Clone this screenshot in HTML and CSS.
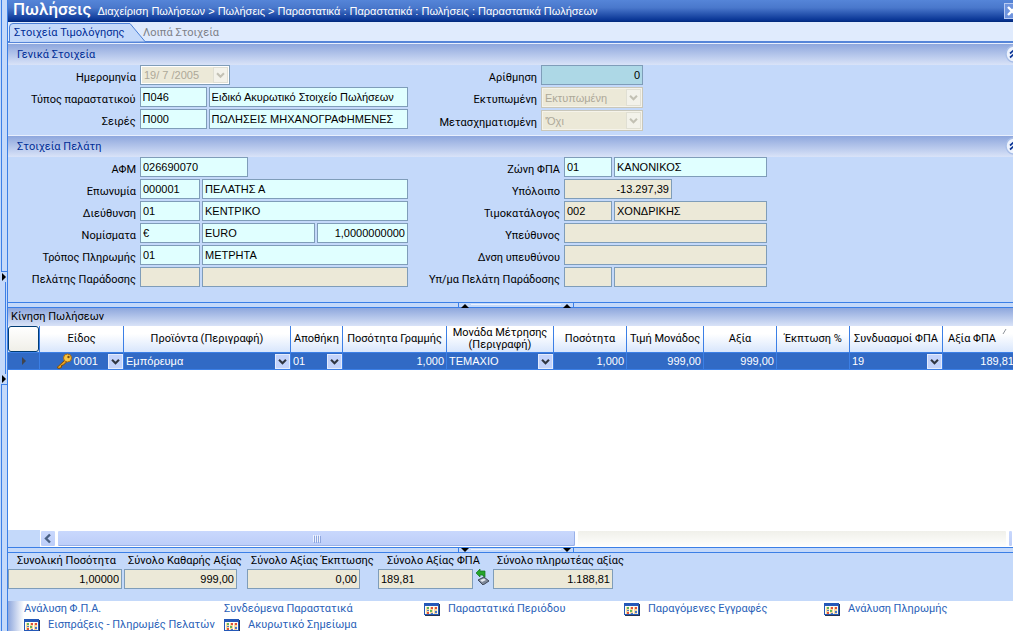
FILE: index.html
```html
<!DOCTYPE html>
<html lang="el">
<head>
<meta charset="utf-8">
<title>Πωλήσεις</title>
<link rel="stylesheet" href="styles.css">
</head>
<body>
<svg class="defs" aria-hidden="true">
  <symbol id="chev" viewBox="0 0 15 15"><path d="M3.5 5.5l4 4 4-4" fill="none" stroke="currentColor" stroke-width="2.4"/></symbol>
  <symbol id="report" viewBox="0 0 16 13">
    <path d="M2 1h14v12H1z" fill="#26344f"/>
    <rect x="0.5" y="0.5" width="14" height="11" fill="#fffdf0" stroke="#2458b8"/>
    <path d="M0 0h15v3H0z" fill="#2458b8"/>
    <path d="M2 4h3v7H2zM6 4h3v7H6zM10 4h3v7h-3z" fill="#f6d9a0"/>
    <path d="M3 4h2v2H3zM6 7h2v2H6z" fill="#5fb45a"/>
    <path d="M7 4h2v2H7zM11 4h2v2h-2zM3 9h2v2H3z" fill="#e0503a"/>
    <path d="M11 8h2v2h-2zM3 7h2v1H3zM7 10h2v1H7z" fill="#4a78c8"/>
  </symbol>
  <symbol id="collapse" viewBox="0 0 18 18">
    <circle cx="9" cy="9" r="8" fill="#eef3fd" stroke="#a9bfe8" stroke-width="1.5"/>
    <path d="M5 8.5l4-3.500 4 3.500M5 12.500l4-3.500 4 3.500" fill="none" stroke="#0b3596" stroke-width="1.7"/>
  </symbol>
</svg>
<div class="app">
  <aside class="rail">
    <button class="rail-grip" aria-label="Πλαϊνό πλαίσιο">
      <svg width="5" height="8"><path d="M1 0l4 4-4 4z"/></svg>
      <svg width="5" height="8"><path d="M1 0l4 4-4 4z"/></svg>
    </button>
  </aside>
  <main class="main">
    <header class="titlebar">
      <h1>Πωλήσεις</h1>
      <p>Διαχείριση Πωλήσεων &gt; Πωλήσεις &gt; Παραστατικά : Παραστατικά : Πωλήσεις : Παραστατικά Πωλήσεων</p>
      <button class="close" aria-label="Κλείσιμο"><svg width="16" height="14"><path d="M4 3l8 8M12 3l-8 8" stroke="#fff" stroke-width="2.4"/></svg></button>
    </header>
    <nav class="tabs">
      <svg class="tab-shape" width="132" height="19" aria-hidden="true"><path d="M0.500 19V4q0-3.500 3.500-3.500h117l15 18" fill="#c4d9fa" stroke="#4a80d8"/></svg>
      <button class="tab active">Στοιχεία Τιμολόγησης</button>
      <button class="tab">Λοιπά Στοιχεία</button>
    </nav>

    <section>
      <h2 class="section-head">Γενικά Στοιχεία<button class="collapse" aria-label="Σύμπτυξη"><svg width="18" height="18"><use href="#collapse"/></svg></button></h2>
      <div class="form general">
        <div class="pane left">
          <div class="row"><label for="date">Ημερομηνία</label><span class="drop date"><select id="date" disabled><option>19/ 7 /2005</option></select><svg><use href="#chev"/></svg></span></div>
          <div class="row"><label for="type">Τύπος παραστατικού</label><input id="type" class="w67" value="Π046"><input class="w200" aria-label="Περιγραφή τύπου" value="Ειδικό Ακυρωτικό Στοιχείο Πωλήσεων"></div>
          <div class="row"><label for="series">Σειρές</label><input id="series" class="w67" value="Π000"><input class="w200" aria-label="Περιγραφή σειράς" value="ΠΩΛΗΣΕΙΣ ΜΗΧΑΝΟΓΡΑΦΗΜΕΝΕΣ"></div>
        </div>
        <div class="pane right">
          <div class="row"><label for="num">Αρίθμηση</label><input id="num" class="w102 number teal" value="0"></div>
          <div class="row tall"><label for="printed">Εκτυπωμένη</label><span class="drop"><select id="printed" disabled><option>Εκτυπωμένη</option></select><svg><use href="#chev"/></svg></span></div>
          <div class="row tall"><label for="conv">Μετασχηματισμένη</label><span class="drop"><select id="conv" disabled><option>'Όχι</option></select><svg><use href="#chev"/></svg></span></div>
        </div>
      </div>
    </section>

    <section>
      <h2 class="section-head">Στοιχεία Πελάτη<button class="collapse" aria-label="Σύμπτυξη"><svg width="18" height="18"><use href="#collapse"/></svg></button></h2>
      <div class="form customer">
        <div class="pane left">
          <div class="row"><label for="afm">ΑΦΜ</label><input id="afm" class="w108" value="026690070"></div>
          <div class="row"><label for="name">Επωνυμία</label><input id="name" class="w60" value="000001"><input class="w206" aria-label="Όνομα πελάτη" value="ΠΕΛΑΤΗΣ Α"></div>
          <div class="row"><label for="addr">Διεύθυνση</label><input id="addr" class="w60" value="01"><input class="w206" aria-label="Περιγραφή διεύθυνσης" value="ΚΕΝΤΡΙΚΟ"></div>
          <div class="row"><label for="cur">Νομίσματα</label><input id="cur" class="w60" value="€"><input class="w113" aria-label="Όνομα νομίσματος" value="EURO"><input class="w91 number" aria-label="Ισοτιμία" value="1,0000000000"></div>
          <div class="row"><label for="pay">Τρόπος Πληρωμής</label><input id="pay" class="w60" value="01"><input class="w206" aria-label="Περιγραφή πληρωμής" value="ΜΕΤΡΗΤΑ"></div>
          <div class="row"><label for="deliv">Πελάτης Παράδοσης</label><input id="deliv" class="w60" readonly><input class="w206" aria-label="Όνομα παράδοσης" readonly></div>
        </div>
        <div class="pane right">
          <div class="row"><label for="zone">Ζώνη ΦΠΑ</label><input id="zone" class="w48" value="01"><input class="w153" aria-label="Περιγραφή ζώνης" value="ΚΑΝΟΝΙΚΟΣ"></div>
          <div class="row"><label for="bal">Υπόλοιπο</label><input id="bal" class="w108 number" readonly value="-13.297,39"></div>
          <div class="row"><label for="price">Τιμοκατάλογος</label><input id="price" class="w48" readonly value="002"><input class="w153" aria-label="Περιγραφή τιμοκαταλόγου" readonly value="ΧΟΝΔΡΙΚΗΣ"></div>
          <div class="row"><label for="resp">Υπεύθυνος</label><input id="resp" class="w203" readonly></div>
          <div class="row"><label for="respaddr">Δνση υπευθύνου</label><input id="respaddr" class="w203" readonly></div>
          <div class="row"><label for="branch">Υπ/μα Πελάτη Παράδοσης</label><input id="branch" class="w48" readonly><input class="w153" aria-label="Περιγραφή υποκαταστήματος" readonly></div>
        </div>
      </div>
    </section>

    <div class="splitter"><span class="grip"><svg width="8" height="5"><path d="M0 5l4-4 4 4z"/></svg><svg width="8" height="5"><path d="M0 5l4-4 4 4z"/></svg></span></div>

    <section class="lines">
      <h2 class="grid-title">Κίνηση Πωλήσεων</h2>
      <div class="grid-body">
        <table>
          <colgroup><col class="c32"><col class="c84"><col class="c167"><col class="c52"><col class="c104"><col class="c107"><col class="c73"><col class="c77"><col class="c73"><col class="c73"><col class="c93"><col class="c74"></colgroup>
          <thead>
            <tr><th class="corner"><button aria-label="Επιλογή όλων"></button></th><th>Είδος</th><th>Προϊόντα (Περιγραφή)</th><th>Αποθήκη</th><th>Ποσότητα Γραμμής</th><th>Μονάδα Μέτρησης (Περιγραφή)</th><th>Ποσότητα</th><th>Τιμή Μονάδος</th><th>Αξία</th><th>Έκπτωση %</th><th>Συνδυασμοί ΦΠΑ</th><th class="sorted">Αξία ΦΠΑ<svg width="7" height="7"><path d="M1 6l3-5" stroke="#8d9299"/></svg></th></tr>
          </thead>
          <tbody>
            <tr>
              <td class="marker"><svg width="6" height="8"><path d="M1 0l4 4-4 4z" fill="#41454f"/></svg></td>
              <td><span class="cell end"><svg class="key" width="17" height="16"><path d="M9 7L1 14.500l2 1 2.500-1v-2l2-.5 3-3" fill="#e8a020" stroke="#7b4c0c"/><circle cx="11.500" cy="5" r="4" fill="#f7c545" stroke="#a86a10"/><circle cx="12.500" cy="4" r="1.200" fill="#7b4c0c"/></svg>0001<button class="dd" aria-label="Άνοιγμα"><svg><use href="#chev"/></svg></button></span></td>
              <td><span class="cell">Εμπόρευμα<button class="dd" aria-label="Άνοιγμα"><svg><use href="#chev"/></svg></button></span></td>
              <td><span class="cell">01<button class="dd" aria-label="Άνοιγμα"><svg><use href="#chev"/></svg></button></span></td>
              <td class="num">1,000</td>
              <td><span class="cell">ΤΕΜΑΧΙΟ<button class="dd" aria-label="Άνοιγμα"><svg><use href="#chev"/></svg></button></span></td>
              <td class="num">1,000</td>
              <td class="num">999,00</td>
              <td class="num">999,00</td>
              <td></td>
              <td><span class="cell">19<button class="dd" aria-label="Άνοιγμα"><svg><use href="#chev"/></svg></button></span></td>
              <td class="num">189,81</td>
            </tr>
          </tbody>
        </table>
      </div>
      <div class="scrollbar">
        <button class="sb-left" aria-label="Κύλιση αριστερά"><svg width="15" height="15"><path d="M9 3.500l-4 4 4 4" fill="none" stroke="#4a6185" stroke-width="2.400"/></svg></button>
        <div class="thumb"><i></i><i></i><i></i><i></i></div>
        <div class="track"></div>
        <button class="sb-right" aria-label="Κύλιση δεξιά"></button>
      </div>
    </section>

    <div class="splitter"><span class="grip"><svg width="8" height="5"><path d="M0 0l4 4 4-4z"/></svg><svg width="8" height="5"><path d="M0 0l4 4 4-4z"/></svg></span></div>

    <section class="totals">
      <div class="total t1"><label for="s1">Συνολική Ποσότητα</label><input id="s1" class="number" readonly value="1,00000"></div>
      <div class="total t2"><label for="s2">Σύνολο Καθαρής Αξίας</label><input id="s2" class="number" readonly value="999,00"></div>
      <div class="total t3"><label for="s3">Σύνολο Αξίας Έκπτωσης</label><input id="s3" class="number" readonly value="0,00"></div>
      <div class="total t4"><label for="s4">Σύνολο Αξίας ΦΠΑ</label><input id="s4" readonly value="189,81"></div>
      <button class="calc" aria-label="Υπολογισμός"><svg width="14" height="16"><path d="M2 11l6-3 5 4-6 4z" fill="#7d8797" stroke="#414a5c"/><path d="M4 11l4-1.500 2 1.500-4 2z" fill="#e3e7ee"/><path d="M0 4l4-4v2h5v6l-2-1V6H4v2z" fill="#25a52b" stroke="#13711c" stroke-width=".7"/></svg></button>
      <div class="total t5"><label for="s5">Σύνολο πληρωτέας αξίας</label><input id="s5" class="number" readonly value="1.188,81"></div>
    </section>

    <nav class="links">
      <a href="#">Ανάλυση Φ.Π.Α.</a>
      <a href="#">Συνδεόμενα Παραστατικά</a>
      <a href="#"><svg width="16" height="13"><use href="#report"/></svg>Παραστατικά Περιόδου</a>
      <a href="#"><svg width="16" height="13"><use href="#report"/></svg>Παραγόμενες Εγγραφές</a>
      <a href="#"><svg width="16" height="13"><use href="#report"/></svg>Ανάλυση Πληρωμής</a>
      <a href="#"><svg width="16" height="13"><use href="#report"/></svg>Εισπράξεις - Πληρωμές Πελατών</a>
      <a href="#"><svg width="16" height="13"><use href="#report"/></svg>Ακυρωτικό Σημείωμα</a>
    </nav>
  </main>
</div>
</body>
</html>
```
FILE: styles.css
```css
* { box-sizing: border-box; }
body {
  margin: 0;
  font: 11px/16px Roboto, "Liberation Sans", sans-serif;
  color: #000;
  background: #c4d9fa;
  overflow: hidden;
}
button { padding: 0; border: 0; background: none; font: inherit; color: inherit; }
h1, h2, p { margin: 0; font-weight: normal; }
svg { display: block; flex: none; }
.defs { position: absolute; width: 0; height: 0; }

.app { display: flex; height: 100vh; }
.rail {
  flex: none;
  width: 8px;
  display: flex;
  flex-direction: column;
  justify-content: center;
  border-left: 1px solid #c4d9fa;
  border-right: 1px solid #3b7fe6;
  box-shadow: inset 1px 0 #3b7fe6;
  background: #c4d9fa;
}
.rail-grip {
  height: 114px;
  margin-top: 24px;
  padding: 1px 0;
  display: flex;
  flex-direction: column;
  justify-content: space-between;
  border-top: 1px solid #3b7fe6;
  border-bottom: 1px solid #3b7fe6;
  background: linear-gradient(#3b7fe6, #3b7fe6) 4px 50% / 1px 92px no-repeat, #c4d9fa;
}
.main { flex: 1; min-width: 0; display: flex; flex-direction: column; overflow: hidden; }

.titlebar {
  height: 22px;
  flex: none;
  display: flex;
  align-items: center;
  gap: 6px;
  padding-left: 5px;
  color: #fff;
  white-space: nowrap;
  background: linear-gradient(#5585d8 0, #4a78cc 35%, #0a3696 90%, #002878);
}
.titlebar h1 { font-size: 17px; line-height: 18px; padding-bottom: 4px; font-weight: 500; }
.titlebar p { font-family: "Liberation Sans", Arial, sans-serif; }
.close {
  margin-left: auto;
  margin-right: -7px;
  flex: none;
  width: 16px;
  height: 16px;
  border: 1px solid #b8cbf2;
  background: #6f94de;
}
.close svg { margin: 0 -1px; }

.tabs {
  position: relative;
  height: 21px;
  flex: none;
  display: flex;
  padding: 3px 0 0 1px;
  background: #e0ebfd;
  border-bottom: 2px solid #5585d8;
}
.tab-shape { position: absolute; left: 1px; bottom: -1px; overflow: visible; }
.tab { position: relative; height: 16px; padding-left: 5px; color: #7c8088; }
.tab.active { width: 129px; text-align: left; color: #002d96; }

.section-head {
  position: relative;
  height: 22px;
  padding: 3px 9px 0;
  line-height: 16px;
  font-size: 11px;
  color: #002d96;
  border-top: 1px solid #e8effd;
  background: linear-gradient(#8ea7dd, #d9e3f8);
}
.collapse { position: absolute; right: -10px; top: 1px; }

.form { display: flex; }
.general { height: 70px; }
.customer { height: 145px; }
.left { width: 400px; flex: none; }
.row { display: flex; gap: 2px; height: 22px; }
.row.tall { height: 23px; }
.row label { width: 130px; padding-top: 5px; padding-right: 2px; text-align: right; line-height: 16px; }
.general .right label { width: 131px; }
.customer .right label { width: 154px; }

input, select {
  height: 20px;
  margin: 0;
  padding: 0 2px;
  border: 1px solid #7f9db9;
  border-radius: 0;
  background: #e0ffff;
  color: #000;
  font: 11px/18px "Liberation Sans", Arial, sans-serif;
}
input:read-only { background: #ece9d8; }
.number { text-align: right; }
.teal { background: #add8e6; }
.w48 { width: 48px; }
.w60 { width: 60px; }
.w67 { width: 67px; }
.w91 { width: 91px; }
.w102 { width: 102px; }
.w108 { width: 108px; }
.w113 { width: 113px; }
.w153 { width: 153px; }
.w200 { width: 200px; }
.w203 { width: 203px; }
.w206 { width: 206px; }

.drop { position: relative; width: 102px; height: 21px; }
.drop select {
  appearance: none;
  width: 100%;
  height: 100%;
  padding: 0 3px;
  opacity: 1;
  border-color: #c9c7ba;
  box-shadow: inset 0 0 0 1px #f5f3ea;
  background: #ece9d8;
  color: #aca899;
}
.drop.date { width: 90px; height: 20px; }
.drop.date select { border-color: #7f9db9; box-shadow: inset 0 0 0 1px #fff; }
.drop svg {
  position: absolute;
  right: 2px;
  top: 2px;
  width: 15px;
  height: calc(100% - 4px);
  color: #c3c1b4;
  background: #f3f2ea;
  border: 1px solid #e0dfd3;
  pointer-events: none;
}

.splitter {
  height: 6px;
  flex: none;
  display: flex;
  justify-content: center;
  border-top: 1px solid #3b7fe6;
  border-bottom: 1px solid #3b7fe6;
}
.grip {
  width: 116px;
  margin-left: 10px;
  display: flex;
  justify-content: space-between;
  padding: 0 2px;
  border: solid #3b7fe6;
  border-width: 0 1px;
  background: linear-gradient(#e8f0fe, #e8f0fe) 50% 1px / 90px 1px no-repeat, #c4d9fa;
}

.lines { flex: 1; min-height: 0; display: flex; flex-direction: column; }
.grid-title {
  height: 18px;
  flex: none;
  padding: 0 3px;
  font-size: 11px;
  line-height: 17px;
  background: linear-gradient(#8ea7dd, #d9e3f8);
}
.grid-body { flex: 1; min-height: 0; overflow: hidden; background: #fff; }
table { width: 1009px; table-layout: fixed; border-collapse: separate; border-spacing: 0; }
.c32 { width: 32px; }
.c52 { width: 52px; }
.c73 { width: 73px; }
.c74 { width: 74px; }
.c77 { width: 77px; }
.c84 { width: 84px; }
.c93 { width: 93px; }
.c104 { width: 104px; }
.c107 { width: 107px; }
.c167 { width: 167px; }
th, td { padding: 0; border: solid #3b7fe6; border-width: 0 1px 1px 0; overflow: hidden; }
th {
  height: 27px;
  font-weight: normal;
  line-height: 12px;
  background: linear-gradient(#fff 30%, #d8e6fc);
}
thead th:not(.corner):not(:nth-child(6)) { white-space: nowrap; }
.corner button {
  display: block;
  width: 31px;
  height: 26px;
  border: 1px solid #003c74;
  border-radius: 3px;
  background: linear-gradient(#fff, #f0efe8);
}
.sorted { position: relative; padding-right: 15px; }
.sorted svg { position: absolute; top: 2px; right: 7px; }
td { height: 17px; font: 11px/16px "Liberation Sans", Arial, sans-serif; color: #fff; background: #316ac5; white-space: nowrap; }
.marker svg { margin: auto; }
.num { text-align: right; padding-right: 2px; }
.cell { display: flex; align-items: center; height: 16px; padding-left: 2px; }
.cell.end { justify-content: flex-end; gap: 1px; }
.dd {
  margin-left: auto;
  width: 15px;
  height: 15px;
  flex: none;
  border: 1px solid #e4ecfd;
  background: #c3d3fb;
  color: #303642;
}
.end .dd { margin-left: 9px; }
.dd svg { width: 13px; height: 13px; }

.scrollbar { height: 17px; flex: none; display: flex; gap: 1px; padding-left: 32px; background: linear-gradient(90deg, #c4d9fa 32px, #fff 32px); }
.scrollbar > * { height: 17px; border: 1px solid #fff; border-radius: 2px; background: linear-gradient(#c9d8fd, #bccdf8); }
.sb-left { width: 16px; }
.thumb { flex: 520; display: flex; justify-content: center; align-items: center; gap: 1px; box-shadow: inset -1px -1px #98b0e8; }
.thumb i { width: 1px; height: 7px; background: #eef3fe; box-shadow: 1px 1px #8ea6de; }
.scrollbar .track { flex: 431; background: linear-gradient(#f0f0ea, #fefefc); }
.sb-right { width: 5px; }

.totals { height: 48px; flex: none; display: flex; align-items: flex-start; }
.total { display: flex; flex-direction: column; white-space: nowrap; }
.total label { height: 16px; line-height: 16px; padding-left: 4px; }
.total input { width: 100%; }
.t1 { width: 114px; margin-right: 2px; }
.t2 { width: 113px; margin-right: 10px; }
.t3 { width: 113px; margin-right: 18px; }
.t4 { width: 95px; }
.t5 { width: 120px; }
.t1 label, .t4 label { padding-left: 9px; }
.calc { width: 20px; margin-top: 16px; padding-left: 3px; }

.links {
  height: 30px;
  flex: none;
  display: grid;
  grid-template-columns: repeat(5, 200px);
  grid-auto-rows: 16px;
  padding-left: 16px;
  overflow: hidden;
  background: linear-gradient(90deg, #8ea7dd, #fff 16px);
}
.links a { display: flex; align-items: center; gap: 8px; color: #2a5fb8; text-decoration: none; white-space: nowrap; }
```
